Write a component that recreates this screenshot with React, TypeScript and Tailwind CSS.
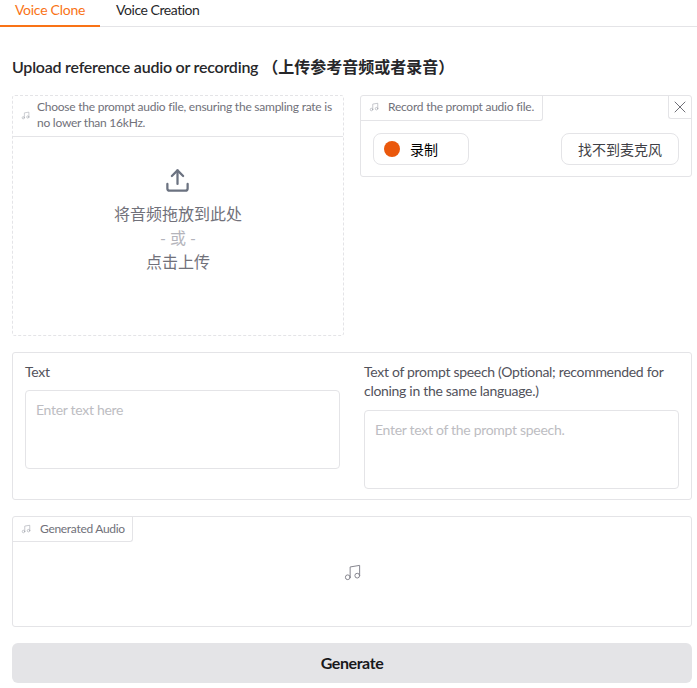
import React from "react";
import { Music, Upload, X } from "lucide-react";

const LabelIcon = ({ size = 10 }: { size?: number }) => (
  <Music size={size} strokeWidth={1.5} className="text-[#a5a9b1] shrink-0" />
);

const App: React.FC = () => {
  return (
    <div className="w-[697px] h-[688px] overflow-hidden bg-white font-['Lato','Noto_Sans_CJK_SC',sans-serif] text-[#27272a]">
      <div className="flex h-[27px] border-b border-[#e4e4e7]">
        <div className="w-[100px] h-[27px] border-b-2 border-[#f97316] text-[14px] leading-[20px] tracking-[-0.27px] text-[#f97316] text-center">
          Voice Clone
        </div>
        <div className="px-4 text-[14px] leading-[20px] tracking-[-0.45px] text-center">Voice Creation</div>
      </div>

      <div className="pl-3 pr-[5px]">
        <h2 className="mt-[28px] h-[24px] text-[16px] leading-[24px] font-semibold whitespace-pre">
          <span className="tracking-[-0.23px]">Upload reference audio or recording</span>
          {" （上传参考音频或者录音）"}
        </h2>

        <div className="mt-[16px] flex gap-4 items-start">
          <div className="w-[332px] h-[241px] border border-dashed border-[#e4e4e7] rounded-[3px] flex flex-col">
            <div className="h-[41px] flex items-center gap-[7px] pl-2 pr-2 pb-[2px] border-b border-[#e4e4e7] text-[12px] leading-[16px] tracking-[-0.24px] text-[#71717a]">
              <LabelIcon size={9} />
              <span>Choose the prompt audio file, ensuring the sampling rate is no lower than 16kHz.</span>
            </div>
            <div className="flex flex-col items-center pt-[30px] text-[#71717a]">
              <Upload size={27} strokeWidth={2} className="text-[#6b7280] -ml-[2px]" />
              <div className="mt-[8px] text-[16px] leading-[24px]">将音频拖放到此处</div>
              <div className="text-[16px] leading-[24px] text-[#b4b4bb]">- 或 -</div>
              <div className="text-[16px] leading-[24px]">点击上传</div>
            </div>
          </div>

          <div className="relative w-[332px] h-[82px] border border-[#e4e4e7] rounded-[3px]">
            <div className="w-[182px] h-[25px] flex items-center gap-[9px] pl-2 pb-[2px] border-r border-b border-[#e4e4e7] rounded-br-[3px] text-[12px] tracking-[-0.24px] whitespace-nowrap text-[#71717a]">
              <LabelIcon />
              <span>Record the prompt audio file.</span>
            </div>
            <button className="absolute top-0 right-0 w-[23px] h-[23px] flex items-center justify-center border-l border-b border-[#e4e4e7] rounded-bl-[3px] text-[#52525b]">
              <X size={20} strokeWidth={1} />
            </button>
            <div className="flex justify-between pl-3 pr-3 mt-[12px]">
              <div className="w-[96px] h-[32px] flex items-center border border-[#e4e4e7] rounded-[8px] pl-[10px] text-[14px] text-black">
                <span className="w-4 h-4 rounded-full bg-[#ea580c]" />
                <span className="ml-[10px]">录制</span>
              </div>
              <div className="w-[118px] h-[32px] flex items-center justify-center border border-[#e4e4e7] rounded-[8px] text-[14px] text-[#3f3f46]">
                找不到麦克风
              </div>
            </div>
          </div>
        </div>

        <div className="mt-[16px] h-[148px] border border-[#e4e4e7] rounded-[3px] flex gap-6 px-3 pt-[9px]">
          <div className="flex-1">
            <div className="text-[14px] leading-[19.5px] tracking-[-0.3px] text-[#52525b]">Text</div>
            <div className="mt-2 h-[79px] border border-[#e4e4e7] rounded-[4px] px-[10px] pt-[9px] text-[14px] leading-[20px] tracking-[-0.3px] text-[#bdbdc2]">
              Enter text here
            </div>
          </div>
          <div className="flex-1">
            <div className="text-[14px] leading-[19px] tracking-[-0.3px] text-[#52525b]">
              Text of prompt speech (Optional; recommended for cloning in the same language.)
            </div>
            <div className="mt-[10px] h-[79px] border border-[#e4e4e7] rounded-[4px] px-[10px] pt-[9px] text-[14px] leading-[20px] tracking-[-0.3px] text-[#bdbdc2]">
              Enter text of the prompt speech.
            </div>
          </div>
        </div>

        <div className="relative mt-[16px] h-[111px] border border-[#e4e4e7] rounded-[3px]">
          <div className="w-[120px] h-[25px] flex items-center gap-[9px] pl-2 border-r border-b border-[#e4e4e7] rounded-br-[3px] text-[12px] tracking-[-0.3px] whitespace-nowrap text-[#71717a]">
            <LabelIcon />
            <span>Generated Audio</span>
          </div>
          <div className="flex justify-center pt-[21px]">
            <Music size={19} strokeWidth={1.25} className="text-[#85858e]" />
          </div>
        </div>

        <button className="mt-[16px] w-full h-[40px] rounded-[6px] bg-[#e4e4e7] text-[16px] font-bold tracking-[-0.4px] text-[#18181b]">
          Generate
        </button>
      </div>
    </div>
  );
};

export default App;
